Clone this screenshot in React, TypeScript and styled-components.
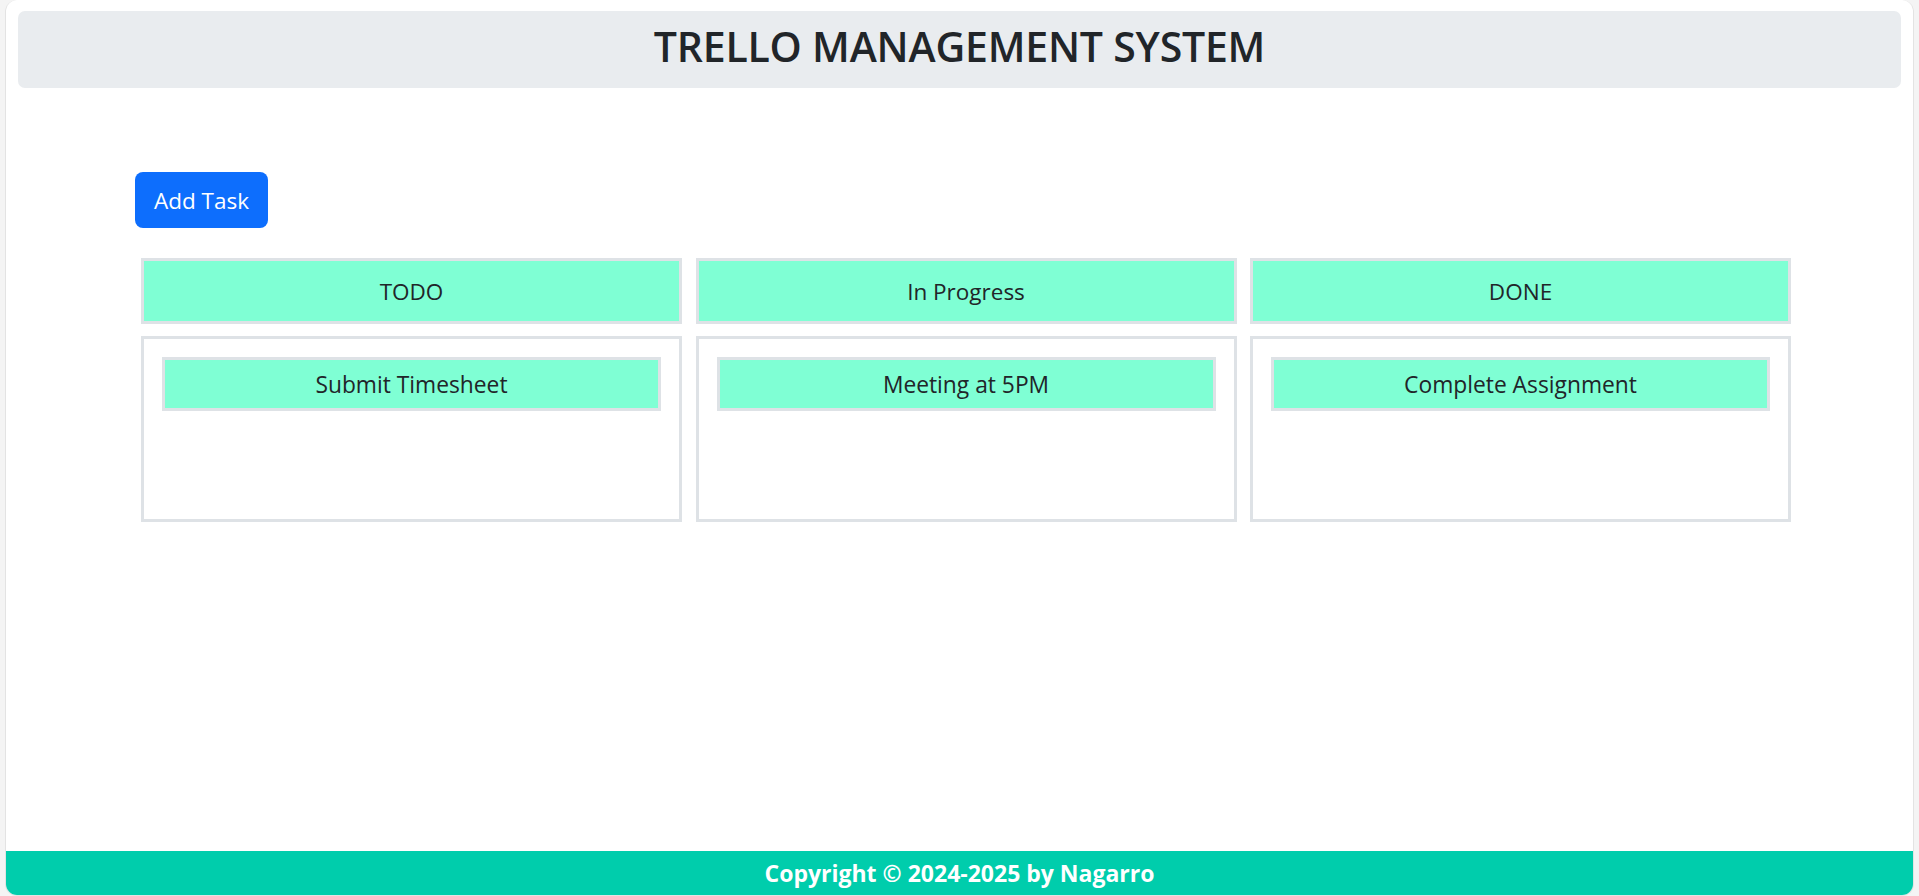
import React from "react";
import styled, { createGlobalStyle } from "styled-components";

const GlobalStyle = createGlobalStyle`
  html, body {
    margin: 0;
    padding: 0;
    background: #f4f4f4;
    font-family: "Open Sans", "Noto Sans", sans-serif;
    color: #212529;
  }
  #root {
    padding: 0 5px;
  }
  * { box-sizing: border-box; }
`;

const Frame = styled.div`
  height: 896px;
  background: #ffffff;
  border: 1px solid #e3e3e3;
  border-top: none;
  border-radius: 12px;
  overflow: hidden;
  display: flex;
  flex-direction: column;
  padding-top: 11px;
`;

const TitleBar = styled.header`
  margin: 0 12px;
  height: 77px;
  padding-bottom: 7px;
  background: #e9ecef;
  border-radius: 7px;
  display: flex;
  align-items: center;
  justify-content: center;
`;

const Title = styled.h1`
  margin: 0;
  font-size: 41px;
  font-weight: 600;
  line-height: 1;
  color: #212529;
  letter-spacing: -0.2px;
`;

const Main = styled.main`
  padding: 84px 122px 0 129px;
  display: flex;
  flex-direction: column;
  align-items: flex-start;
`;

const AddButton = styled.button`
  width: 133px;
  height: 56px;
  background: #0d6efd;
  color: #ffffff;
  border: none;
  border-radius: 8px;
  font-family: "Open Sans", "Noto Sans", sans-serif;
  font-size: 22.5px;
  font-weight: 400;
  cursor: pointer;
  padding: 0;
`;

const Board = styled.div`
  margin: 30px 0 0 6px;
  align-self: stretch;
  display: grid;
  grid-template-columns: repeat(3, 1fr);
  column-gap: 13.5px;
`;

const Column = styled.section`
  display: flex;
  flex-direction: column;
  gap: 12px;
`;

const ColumnHeader = styled.div`
  height: 66px;
  background: #7fffd4;
  border: 3px solid #dee2e6;
  display: flex;
  align-items: center;
  justify-content: center;
  font-size: 22.5px;
  color: #212529;
`;

const ColumnBody = styled.div`
  height: 186px;
  border: 3px solid #dee2e6;
  padding: 18px;
  display: flex;
  flex-direction: column;
  gap: 10px;
`;

const TaskCard = styled.div`
  height: 54px;
  background: #7fffd4;
  border: 3px solid #dee2e6;
  display: flex;
  align-items: center;
  justify-content: center;
  font-size: 22.8px;
  color: #212529;
`;

const Footer = styled.footer`
  margin-top: auto;
  height: 44px;
  background: #00cdac;
  color: #ffffff;
  font-weight: 700;
  font-size: 23px;
  display: flex;
  align-items: center;
  justify-content: center;
`;

const columns = [
  { title: "TODO", tasks: ["Submit Timesheet"] },
  { title: "In Progress", tasks: ["Meeting at 5PM"] },
  { title: "DONE", tasks: ["Complete Assignment"] },
];

export default function App() {
  return (
    <>
      <GlobalStyle />
      <Frame>
        <TitleBar>
          <Title>TRELLO MANAGEMENT SYSTEM</Title>
        </TitleBar>
        <Main>
          <AddButton>Add Task</AddButton>
          <Board>
            {columns.map((c) => (
              <Column key={c.title}>
                <ColumnHeader>{c.title}</ColumnHeader>
                <ColumnBody>
                  {c.tasks.map((t) => (
                    <TaskCard key={t}>{t}</TaskCard>
                  ))}
                </ColumnBody>
              </Column>
            ))}
          </Board>
        </Main>
        <Footer>Copyright © 2024-2025 by Nagarro</Footer>
      </Frame>
    </>
  );
}
